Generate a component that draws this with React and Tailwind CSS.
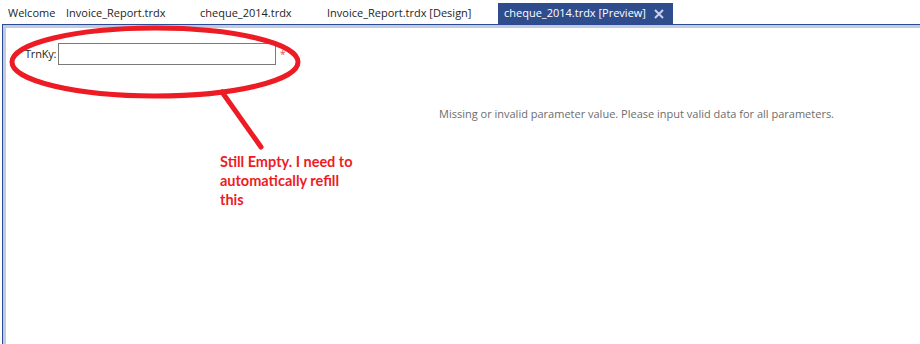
import React from 'react'

const tabs = [
  { label: 'Welcome', w: 'w-[58px]' },
  { label: 'Invoice_Report.trdx', w: 'w-[134px]' },
  { label: 'cheque_2014.trdx', w: 'w-[127px]' },
  { label: 'Invoice_Report.trdx [Design]', w: 'w-[170px]' },
]

export default function App() {
  return (
    <div className="relative w-[920px] h-[344px] bg-white overflow-hidden font-['Open_Sans',sans-serif] text-[11px] text-[#1e1e1e]">
      {/* tab strip */}
      <div className="flex items-end h-[24px] pl-[8px]">
        {tabs.map((t) => (
          <div key={t.label} className={`${t.w} h-[21px] flex items-center whitespace-nowrap`}>
            {t.label}
          </div>
        ))}
        <div className="h-[21px] w-[175px] shrink-0 ml-[1px] bg-[#2f4c8c] text-white flex items-center pl-[6px] whitespace-nowrap">
          <span className="w-[150px] shrink-0">cheque_2014.trdx [Preview]</span>
          <svg className="shrink-0" width="10" height="10" viewBox="0 0 10 10">
            <path d="M1 1L9 9M9 1L1 9" stroke="#c9d2e6" strokeWidth="2" />
          </svg>
        </div>
      </div>

      {/* document frame */}
      <div className="ml-[2px] border-t border-l border-[#2b4a97] h-[320px]">
        <div className="border-t-[3px] border-l-[3px] border-[#c3cbdf] h-full bg-white">
          <div className="flex items-center pt-[15px] pl-[19px]">
            <span className="w-[33px] tracking-[-0.2px]">TrnKy:</span>
            <div className="w-[218px] h-[22px] border border-[#7a7a7a] bg-white"></div>
            <span className="ml-[4px] text-[#e0504a] text-[10px] leading-none">*</span>
          </div>
          <div className="mt-[41px] pl-[433px] text-[#6d6d6d]">
            Missing or invalid parameter value. Please input valid data for all parameters.
          </div>
        </div>
      </div>

      {/* annotation */}
      <svg className="absolute left-0 top-0 pointer-events-none" width="920" height="344">
        <ellipse cx="155" cy="62" rx="143" ry="34" fill="none" stroke="#ed1c24" strokeWidth="5" />
        <line x1="222" y1="92" x2="261" y2="147" stroke="#ed1c24" strokeWidth="5" strokeLinecap="round" />
      </svg>
      <div className="absolute left-[220px] top-[152px] w-[140px] font-['Lato',sans-serif] font-bold text-[14.5px] leading-[19px] text-[#ed1c24]">
        Still Empty. I need to automatically refill this
      </div>
    </div>
  )
}
